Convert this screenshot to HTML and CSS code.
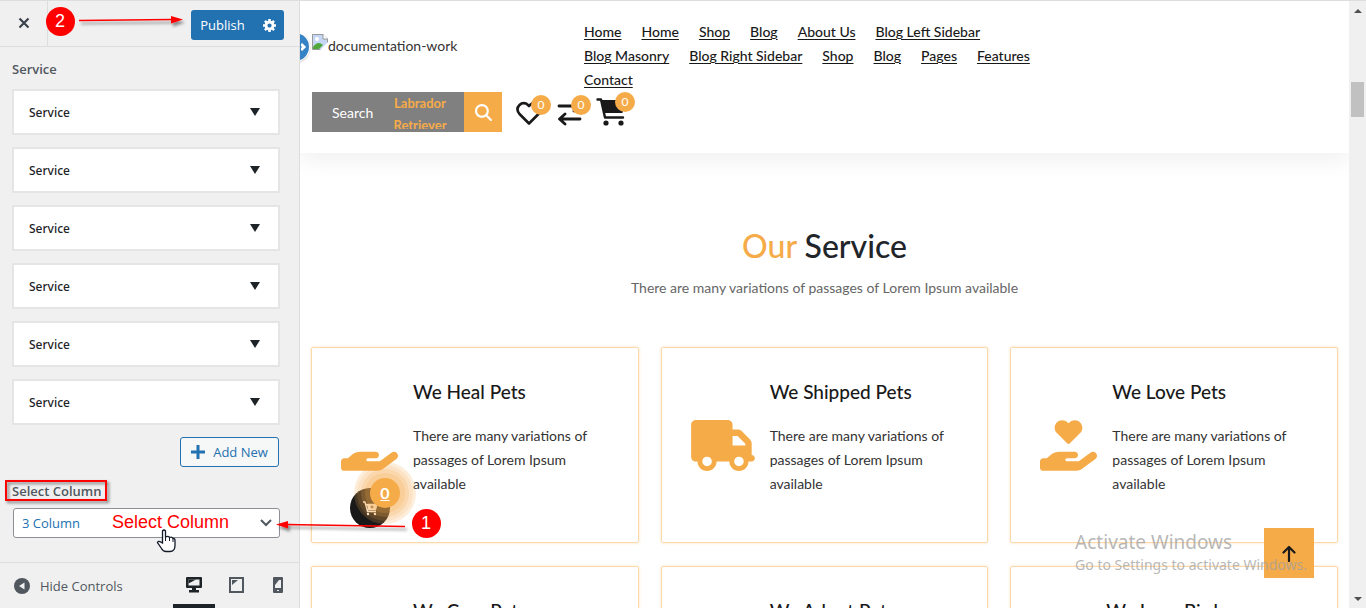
FILE: index.html
```html
<!DOCTYPE html>
<html lang="en">
<head>
<meta charset="utf-8">
<title>Customize: Service</title>
<link rel="stylesheet" href="styles.css">
</head>
<body>
<svg class="defs" aria-hidden="true">
  <symbol id="hand" viewBox="0 0 576 512"><path d="M559.7 392.2c17.8-13.1 21.6-38.1 8.5-55.9s-38.1-21.6-55.9-8.5L392.6 416H272c-8.8 0-16-7.2-16-16s7.2-16 16-16h80c17.7 0 32-14.3 32-32s-14.3-32-32-32H193.7c-29.1 0-57.3 9.9-80 28L68.8 384H32c-17.7 0-32 14.3-32 32v64c0 17.7 14.3 32 32 32h320.500c29 0 57.300-9.300 80.700-26.500z"/></symbol>
  <symbol id="truck" viewBox="0 0 640 512"><path d="M48 0C21.500 0 0 21.500 0 48V368c0 26.500 21.500 48 48 48H64c0 53 43 96 96 96s96-43 96-96H384c0 53 43 96 96 96s96-43 96-96h32c17.700 0 32-14.300 32-32s-14.300-32-32-32V237.300c0-17-6.700-33.300-18.700-45.300L512 114.700c-12-12-28.300-18.700-45.300-18.700H416V48c0-26.500-21.500-48-48-48H48zM416 160h50.700L544 237.300V256H416V160zM112 416a48 48 0 1 1 96 0 48 48 0 1 1-96 0zm368-48a48 48 0 1 1 0 96 48 48 0 1 1 0-96z"/></symbol>
  <symbol id="heart-solid" viewBox="0 0 576 512"><path d="M148 76.600C148 34.300 182.300 0 224.600 0c20.300 0 39.800 8.100 54.100 22.400l9.300 9.200 9.200-9.200C311.500 8.100 331 0 351.400 0 393.700 0 428 34.300 428 76.600c0 20.300-8.100 39.800-22.400 54.100L302.100 234.100c-7.800 7.800-20.500 7.800-28.300 0L170.400 130.700C156.100 116.400 148 96.900 148 76.600z"/></symbol>
</svg>

<div class="app">
  <aside class="panel">
    <header class="panel-head">
      <button class="close" aria-label="Close"><svg width="12" height="12" viewBox="0 0 12 12"><path d="M1.500 1.500l9 9M10.500 1.500l-9 9" stroke="#3c434a" stroke-width="2.200"/></svg></button>
      <div class="publish">
        <button class="publish-main">Publish</button>
        <button class="publish-gear" aria-label="Publish settings"><svg width="13" height="13" viewBox="-8 -8 16 16"><circle r="4.300" fill="none" stroke="#fff" stroke-width="3.400"/><path d="M0-8V-5M0 8V5M-8 0H-5M8 0H5M-5.600-5.600l2 2M5.600 5.600l-2-2M-5.600 5.600l2-2M5.600-5.600l-2 2" stroke="#fff" stroke-width="3.200"/></svg></button>
      </div>
    </header>
    <div class="panel-body">
      <h2 class="label">Service</h2>
      <div class="items">
        <button class="item">Service<span class="caret"></span></button>
        <button class="item">Service<span class="caret"></span></button>
        <button class="item">Service<span class="caret"></span></button>
        <button class="item">Service<span class="caret"></span></button>
        <button class="item">Service<span class="caret"></span></button>
        <button class="item">Service<span class="caret"></span></button>
      </div>
      <button class="add"><svg width="14" height="14" viewBox="0 0 14 14"><path d="M7 0v14M0 7h14" stroke="#2271b1" stroke-width="3"/></svg>Add New</button>
      <label class="label" for="columns">Select Column</label>
      <div class="select-wrap">
        <select id="columns" class="select"><option>3 Column</option></select>
        <svg class="chevron" width="12" height="8" viewBox="0 0 12 8"><path d="M1 1l5 5 5-5" fill="none" stroke="#50575e" stroke-width="2"/></svg>
      </div>
    </div>
    <footer class="panel-foot">
      <button class="hide"><svg width="16" height="16" viewBox="0 0 16 16"><circle cx="8" cy="8" r="8" fill="#50575e"/><path d="M10.500 4.500v7L5 8z" fill="#f0f0f1"/></svg>Hide Controls</button>
      <div class="devices">
        <button class="device active" aria-label="Desktop"><svg width="16" height="16" viewBox="0 0 16 16"><path d="M1 0h14q1 0 1 1v9q0 1-1 1h-5v2h3v2.500H3V13h3v-2H1q-1 0-1-1V1q0-1 1-1z" fill="#1d2327"/><path d="M2.500 2.500h11v6h-11z" fill="#f0f0f1"/><path d="M2.500 2.500H10L2.500 6.500z" fill="#1d2327"/></svg></button>
        <button class="device" aria-label="Tablet"><svg width="15" height="16" viewBox="0 0 15 16"><path d="M1 1h13v14H1z" fill="#f0f0f1" stroke="#50575e" stroke-width="2"/><path d="M3 3h6L3 8z" fill="#50575e"/></svg></button>
        <button class="device" aria-label="Mobile"><svg width="10" height="16" viewBox="0 0 10 16"><rect width="10" height="16" rx="1" fill="#50575e"/><path d="M2 3h6v8H2z" fill="#f0f0f1"/><path d="M2 3h4L2 8z" fill="#50575e"/><path d="M4 13h2v1H4z" fill="#f0f0f1"/></svg></button>
      </div>
    </footer>
  </aside>

  <main class="preview">
    <button class="edit" aria-label="Edit"><svg width="8" height="12" viewBox="0 0 8 12"><path d="M0 3l3 3-3 3" fill="none" stroke="#fff" stroke-width="3"/></svg></button>
    <header class="site-head">
      <div class="head-row">
        <a class="logo" href="#"><svg width="16" height="16" viewBox="0 0 16 16"><path d="M.5.5H11L15.500 5v10.500H.5z" fill="#c5d7f5" stroke="#999"/><path d="M11 0v5h5" fill="#fff" stroke="#999"/><circle cx="5" cy="5" r="2" fill="#fff"/><path d="M1 15v-2q5-7 10-2l-4 4z" fill="#4fa83c"/><path d="M8 16l8-8v8z" fill="#fff"/></svg>documentation-work</a>
        <nav class="nav">
          <a href="#">Home</a><a href="#">Home</a><a href="#">Shop</a><a href="#">Blog</a><a href="#">About Us</a><a href="#">Blog Left Sidebar</a><a href="#">Blog Masonry</a><a href="#">Blog Right Sidebar</a><a href="#">Shop</a><a href="#">Blog</a><a href="#">Pages</a><a href="#">Features</a><a href="#">Contact</a>
        </nav>
      </div>
      <div class="tools">
        <form class="search">
          <span class="search-text">Search</span>
          <span class="search-word">Labrador Retriever</span>
          <button class="search-btn" type="button" aria-label="Search"><svg width="17" height="17" viewBox="0 0 512 512"><path fill="#fff" d="M416 208c0 45.900-14.900 88.300-40 122.700L502.600 457.400c12.500 12.500 12.500 32.800 0 45.300s-32.800 12.500-45.300 0L330.700 376c-34.400 25.200-76.800 40-122.700 40C93.100 416 0 322.900 0 208S93.100 0 208 0s208 93.100 208 208zM208 352a144 144 0 1 0 0-288 144 144 0 1 0 0 288z"/></svg></button>
        </form>
        <div class="shop-icons">
          <a class="shop-icon" href="#" aria-label="Wishlist"><svg width="26" height="25" viewBox="0 0 26 25"><path d="M13 22.500L3.500 13C1 10 1 6.500 3.500 4 6 1.500 9.500 1.500 12 4l1 1 1-1c2.500-2.500 6-2.500 8.500 0s2.500 6 0 9z" fill="none" stroke="#191919" stroke-width="2.600" stroke-linejoin="round"/></svg><span class="count">0</span></a>
          <a class="shop-icon" href="#" aria-label="Compare"><svg width="26" height="25" viewBox="0 0 26 25"><path d="M3 5h20M18 0l5 5-5 5M24 18H4M9 13l-5.500 5L9 23" fill="none" stroke="#191919" stroke-width="2.800" stroke-linecap="round" stroke-linejoin="round"/></svg><span class="count">0</span></a>
          <a class="shop-icon cart" href="#" aria-label="Cart"><svg width="30" height="28" viewBox="0 0 30 28"><path d="M1.500 1.500H5l4 18h18" fill="none" stroke="#191919" stroke-width="2.400" stroke-linecap="round" stroke-linejoin="round"/><path d="M5 2h24l-2.500 13H8z" fill="#191919"/><circle cx="10" cy="25" r="2.600" fill="#191919"/><circle cx="25" cy="25" r="2.600" fill="#191919"/></svg><span class="count">0</span></a>
        </div>
      </div>
    </header>

    <section class="services">
      <h1 class="title"><span>Our</span> Service</h1>
      <p class="lead">There are many variations of passages of Lorem Ipsum available</p>
      <div class="cards">
        <article class="card">
          <svg class="icon" width="57" height="51"><use href="#hand"/></svg>
          <div class="card-text"><h3>We Heal Pets</h3><p>There are many variations of passages of Lorem Ipsum available</p></div>
        </article>
        <article class="card">
          <svg class="icon" width="64" height="51"><use href="#truck"/></svg>
          <div class="card-text"><h3>We Shipped Pets</h3><p>There are many variations of passages of Lorem Ipsum available</p></div>
        </article>
        <article class="card">
          <svg class="icon" width="57" height="51"><use href="#hand"/><use href="#heart-solid"/></svg>
          <div class="card-text"><h3>We Love Pets</h3><p>There are many variations of passages of Lorem Ipsum available</p></div>
        </article>
        <article class="card">
          <svg class="icon" width="57" height="51"><use href="#hand"/></svg>
          <div class="card-text"><h3>We Care Pets</h3><p>There are many variations of passages of Lorem Ipsum available</p></div>
        </article>
        <article class="card">
          <svg class="icon" width="64" height="51"><use href="#truck"/></svg>
          <div class="card-text"><h3>We Adopt Pets</h3><p>There are many variations of passages of Lorem Ipsum available</p></div>
        </article>
        <article class="card">
          <svg class="icon" width="51" height="51"><use href="#heart-solid"/></svg>
          <div class="card-text"><h3>We Love Birds</h3><p>There are many variations of passages of Lorem Ipsum available</p></div>
        </article>
      </div>
    </section>

    <a class="float-cart" href="#" aria-label="Cart"><svg width="16" height="16" viewBox="0 0 16 16"><path d="M1 2h2l2.500 9.500H14M4 4.500h11l-1.500 5H5" fill="none" stroke="#fff" stroke-width="1.300"/><path d="M5 5h9.500l-1 4.500H6z" fill="#fff"/><path d="M10 5.500v3M8.500 7h3" stroke="#5b4420"/><circle cx="6" cy="14" r="1.200" fill="#fff"/><circle cx="13" cy="14" r="1.200" fill="#fff"/></svg><span class="float-count">0</span></a>
    <button class="to-top" aria-label="Back to top"><svg width="14" height="17" viewBox="0 0 14 17"><path d="M7 16V2M1.500 7.500L7 2l5.500 5.500" fill="none" stroke="#191919" stroke-width="2.200" stroke-linecap="round" stroke-linejoin="round"/></svg></button>
    <div class="watermark"><strong>Activate Windows</strong><span>Go to Settings to activate Windows.</span></div>
  </main>

  <div class="scrollbar" aria-hidden="true"><i class="arrow up"></i><i class="thumb"></i><i class="arrow down"></i></div>
</div>

<svg class="notes" width="450" height="608" viewBox="0 0 450 608">
  <defs><filter id="sh" x="-10%" y="-200%" width="120%" height="600%"><feDropShadow dx="2" dy="3" stdDeviation="1.500" flood-opacity=".45"/></filter>
  <filter id="sh2" x="-10%" y="-50%" width="120%" height="200%"><feDropShadow dx="2" dy="2" stdDeviation="1.500" flood-opacity=".5"/></filter></defs>
  <circle cx="60.500" cy="21.500" r="14.500" fill="red"/>
  <text class="num" x="60" y="27">2</text>
  <g filter="url(#sh)"><path d="M79 20.500L172 19.500" stroke="red" stroke-width="1.600"/><path d="M171 16l12 3.500-12 4z" fill="red"/></g>
  <g filter="url(#sh)"><path d="M286 524.500L405 526.500" stroke="red" stroke-width="1.600"/><path d="M288 521l-12 3.500 12 4z" fill="red"/></g>
  <circle cx="426.500" cy="523.500" r="14.500" fill="red"/>
  <text class="num" x="426" y="529">1</text>
  <rect x="6" y="481" width="100" height="19" fill="none" stroke="red" stroke-width="2" filter="url(#sh2)"/>
  <text class="hint" x="112" y="528">Select Column</text>
  <path d="M162.500 539V531q1.500-2 3 0v6q3-1.500 4 .5 2.500-1 3.500 1 2-.5 2 2v5q0 6-5 6h-4q-3 0-4.500-3l-4-6q.5-2.500 5 .5z" fill="#fff" stroke="#111827" stroke-width="1.300"/><path d="M165.500 536v5M169.500 537v4M173 539v3" stroke="#111827"/>
</svg>
</body>
</html>
```
FILE: styles.css
```css
* { box-sizing: border-box; }
body { margin: 0; height: 100vh; overflow: hidden; background: #fff; font-family: "Open Sans", "Noto Sans", sans-serif; }
button { border: 0; padding: 0; background: none; font: inherit; color: inherit; }
.defs { position: absolute; width: 0; height: 0; }
.app { display: flex; height: 100%; border-top: 1px solid #ddd; }

.panel { flex: 0 0 300px; display: flex; flex-direction: column; background: #f0f0f0; border-right: 1px solid #ddd; font-size: 13px; }
.panel-head { display: flex; flex: 0 0 46px; justify-content: space-between; align-items: center; padding-right: 15px; border-bottom: 1px solid #ddd; }
.close { width: 48px; height: 45px; border-right: 1px solid #ddd; }
.publish { display: flex; height: 30px; background: #2271b1; color: #fff; border-radius: 3px; margin-top: 3px; }
.publish-main { width: 63px; font-size: 13px; }
.publish-gear { width: 30px; display: grid; place-items: center; }
.panel-body { flex: 1; padding: 12px 19px 0 12px; display: flex; flex-direction: column; min-height: 0; }
.label { margin: 0; font-size: 13px; line-height: 20px; font-weight: 600; color: #50575e; }
.items { display: grid; gap: 12px; margin: 10px 0 12px; }
.item { height: 46px; display: flex; justify-content: space-between; align-items: center; padding: 0 18px 0 15px; background: #fff; border: 2px solid #e5e5e5; font-family: "Noto Sans", "Open Sans", sans-serif; font-weight: 500; font-size: 12px; color: #1d2327; }
.caret { border: 5px solid transparent; border-top: 8px solid #1d2327; border-bottom: 0; }
.add { align-self: flex-end; display: flex; align-items: center; justify-content: center; gap: 8px; width: 99px; height: 30px; margin: 0 1px 14px 0; border: 1px solid #2271b1; border-radius: 3px; background: #f6f7f7; color: #2271b1; }
.select-wrap { position: relative; margin: 7px 0 0 1px; }
.select { appearance: none; width: 100%; height: 30px; padding: 0 8px; border: 1px solid #8c8f94; border-radius: 3px; background: #fff; color: #2271b1; font: inherit; font-size: 13px; }
.chevron { position: absolute; right: 8px; top: 11px; }
.panel-foot { flex: 0 0 46px; display: flex; justify-content: space-between; border-top: 1px solid #ddd; padding: 0 0 0 14px; color: #50575e; }
.hide { display: flex; align-items: center; gap: 10px; }
.devices { display: flex; }
.device { width: 42px; display: grid; place-items: center; padding-top: 3px; border-bottom: 4px solid transparent; }
.device.active { border-bottom-color: #1d2327; }

.preview { flex: 1; min-width: 0; position: relative; overflow: hidden; font-family: Lato, "Open Sans", sans-serif; font-size: 14px; line-height: 24px; color: #191919; }
.edit { position: absolute; left: -19px; top: 32px; width: 28px; height: 28px; border-radius: 50%; background: #3582c4; box-shadow: 0 0 0 1px #fff, 0 1px 3px rgba(0,0,0,.4); display: flex; align-items: center; justify-content: flex-end; }
.site-head { padding: 19px 12px 21px; box-shadow: 0 8px 20px rgba(0,0,0,.06); }
.head-row { display: grid; grid-template-columns: 272px minmax(0, 480px); }
.logo { display: flex; height: 52px; align-items: center; color: #333; text-decoration: none; }
.logo svg { margin-bottom: 8px; }
.nav { display: flex; flex-wrap: wrap; gap: 0 20px; }
.nav a { color: #191919; font-weight: 500; text-decoration: underline; text-underline-offset: 2px; }
.tools { display: flex; gap: 14px; }
.search { display: flex; width: 190px; height: 40px; background: #808080; color: #fff; overflow: hidden; }
.search-text { padding: 9px 0 0 20px; width: 68px; }
.search-word { flex: 1; height: 37px; overflow: hidden; padding-right: 4px; text-align: center; font-weight: 700; font-size: 13px; color: #f6ab49; line-height: 22px; }
.search-btn { width: 38px; height: 40px; background: #f6ab49; display: grid; place-items: center; }
.shop-icons { display: flex; gap: 14px; }
.shop-icon { position: relative; height: 25px; margin-top: 9px; color: #fff; }
.shop-icon.cart { margin-top: 6px; }
.count { position: absolute; right: -9px; top: -6px; width: 20px; height: 20px; border-radius: 50%; background: #f6ab49; color: #fff; font-size: 12px; line-height: 20px; text-align: center; }

.services { padding: 73px 11px 0; }
.title { margin: 0; font-size: 32px; line-height: 40px; font-weight: 500; text-align: center; color: #212529; }
.title span { color: #f6ab49; }
.lead { margin: 10px 0 47px; text-align: center; color: #666; }
.cards { display: grid; grid-template-columns: repeat(3, minmax(0, 1fr)); gap: 23px 22px; }
.card { display: flex; align-items: center; gap: 15px; min-height: 196px; padding: 29px; border: 1px solid #fbd9ab; border-radius: 2px; box-shadow: 0 0 3px rgba(246,171,73,.35); }
.icon { flex: none; fill: #f6ab49; }
.card h3 { margin: 0 0 18px; font-size: 19px; line-height: 28px; font-weight: 500; }
.card p { margin: 0 0 16px; color: #333; }

.float-cart { position: absolute; left: 50px; bottom: 80px; width: 40px; height: 40px; border-radius: 50%; background: #191919; display: grid; place-items: center; }
.float-count { position: absolute; left: 20px; top: -10px; width: 30px; height: 30px; border-radius: 50%; background: #f6ab49; color: #fff; font-size: 16px; font-weight: 700; line-height: 30px; text-align: center; text-decoration: underline; box-shadow: 0 0 0 5px rgba(246,171,73,.2), 0 0 0 9px rgba(246,171,73,.2), 0 0 0 13px rgba(246,171,73,.15), 0 0 0 16px rgba(246,171,73,.2); }
.to-top { position: absolute; right: 35px; bottom: 30px; width: 50px; height: 50px; background: #f6ab49; display: grid; place-items: center; }
.watermark { position: absolute; right: 42px; bottom: 32px; color: rgba(160,160,160,.75); font-family: "Noto Sans", "Open Sans", sans-serif; font-size: 14px; line-height: 22px; display: grid; }
.watermark strong { font-size: 19px; line-height: 24px; font-weight: 400; }

.scrollbar { flex: 0 0 17px; background: #f0f0f0; display: flex; flex-direction: column; align-items: center; padding: 8px 0 7px; }
.arrow { border: 4px solid transparent; }
.up { border-top: 0; border-bottom-color: #505050; }
.down { border-bottom: 0; border-top-color: #505050; margin-top: auto; }
.thumb { width: 13px; height: 35px; margin-top: 69px; background: #c1c1c1; }

.notes { position: absolute; left: 0; top: 0; pointer-events: none; }
.num { font: 18px "Liberation Sans", sans-serif; fill: #fff; text-anchor: middle; }
.hint { font: 18px "Liberation Sans", sans-serif; fill: red; }
```
